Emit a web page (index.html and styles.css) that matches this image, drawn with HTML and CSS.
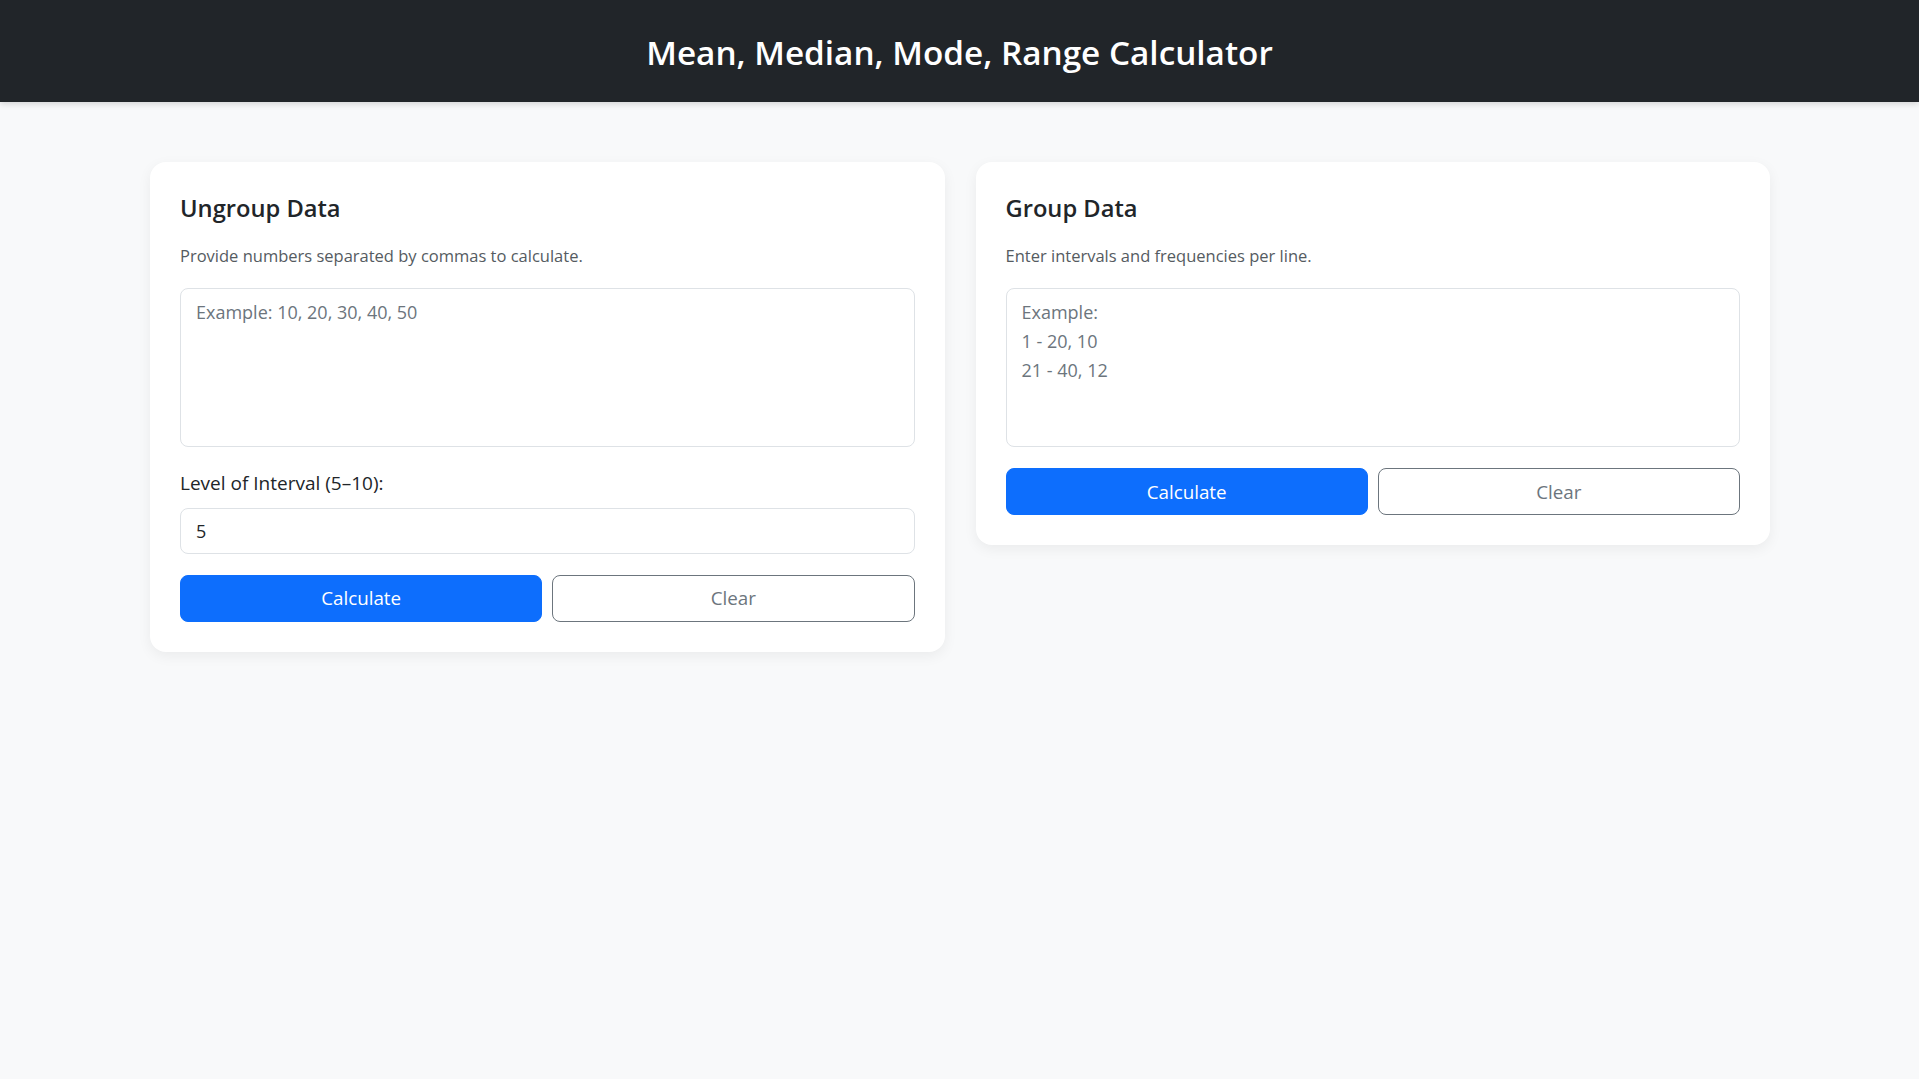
FILE: index.html
```html
<!DOCTYPE html>
<html lang="en">
<head>
<meta charset="utf-8">
<title>Mean, Median, Mode, Range Calculator</title>
<link rel="stylesheet" href="styles.css">
</head>
<body>
<header class="topbar">
  <h1 class="topbar-title">Mean, Median, Mode, Range Calculator</h1>
</header>
<main class="layout">
  <section class="card">
    <h2 class="card-title">Ungroup Data</h2>
    <p class="card-text">Provide numbers separated by commas to calculate.</p>
    <textarea class="field field-area" placeholder="Example: 10, 20, 30, 40, 50"></textarea>
    <label class="field-label" for="interval">Level of Interval (5–10):</label>
    <input class="field field-input" id="interval" type="text" value="5">
    <div class="actions">
      <button class="btn btn-primary" type="button">Calculate</button>
      <button class="btn btn-outline" type="button">Clear</button>
    </div>
  </section>
  <section class="card">
    <h2 class="card-title">Group Data</h2>
    <p class="card-text">Enter intervals and frequencies per line.</p>
    <textarea class="field field-area" placeholder="Example:
1 - 20, 10
21 - 40, 12"></textarea>
    <div class="actions">
      <button class="btn btn-primary" type="button">Calculate</button>
      <button class="btn btn-outline" type="button">Clear</button>
    </div>
  </section>
</main>
</body>
</html>
```
FILE: styles.css
```css
* { box-sizing: border-box; }
html, body { margin: 0; padding: 0; }
body {
  background: #f8f9fa;
  font-family: "Open Sans", "Noto Sans", sans-serif;
  color: #212529;
  min-height: 100vh;
}
.topbar {
  background: #212529;
  padding: 31px 0 29px;
  text-align: center;
  box-shadow: 0 2px 6px rgba(0,0,0,0.15);
}
.topbar-title {
  margin: 0;
  color: #fff;
  font-size: 33.3px;
  font-weight: 600;
  line-height: 42px;
}
.layout {
  display: grid;
  grid-template-columns: 1fr 1fr;
  gap: 31px;
  padding: 60px 149px 60px 150px;
  align-items: start;
}
.card {
  background: #fff;
  border-radius: 16px;
  padding: 30px;
  box-shadow: 0 4px 14px rgba(0,0,0,0.06);
  display: flex;
  flex-direction: column;
}
.card-title {
  margin: 2px 0 0;
  font-size: 23.7px;
  font-weight: 600;
  line-height: 1.2;
}
.card-text {
  margin: 22px 0 0;
  font-size: 16.5px;
  line-height: 1.5;
  color: #555b61;
}
.field {
  display: block;
  width: 100%;
  font-family: inherit;
  font-size: 18px;
  line-height: 1.6;
  color: #212529;
  background: #fff;
  border: 1px solid #dee2e6;
  border-radius: 8px;
  padding: 8px 15px;
}
.field::placeholder { color: #6c757d; opacity: 1; }
.field-area {
  margin-top: 19px;
  height: 159px;
  padding-top: 9px;
  resize: none;
}
.field-label {
  margin-top: 22px;
  font-size: 19px;
  line-height: 1.5;
}
.field-input {
  margin-top: 10px;
  height: 46px;
}
.actions {
  margin-top: 21px;
  display: grid;
  grid-template-columns: 1fr 1fr;
  gap: 10px;
}
.btn {
  font-family: inherit;
  font-size: 18.8px;
  line-height: 1.6;
  height: 47px;
  border-radius: 8px;
  padding: 0 12px;
  cursor: pointer;
}
.btn-primary {
  background: #0d6efd;
  border: 1px solid #0d6efd;
  color: #fff;
}
.btn-outline {
  background: #fff;
  border: 1px solid #6c757d;
  color: #6c757d;
}
```
